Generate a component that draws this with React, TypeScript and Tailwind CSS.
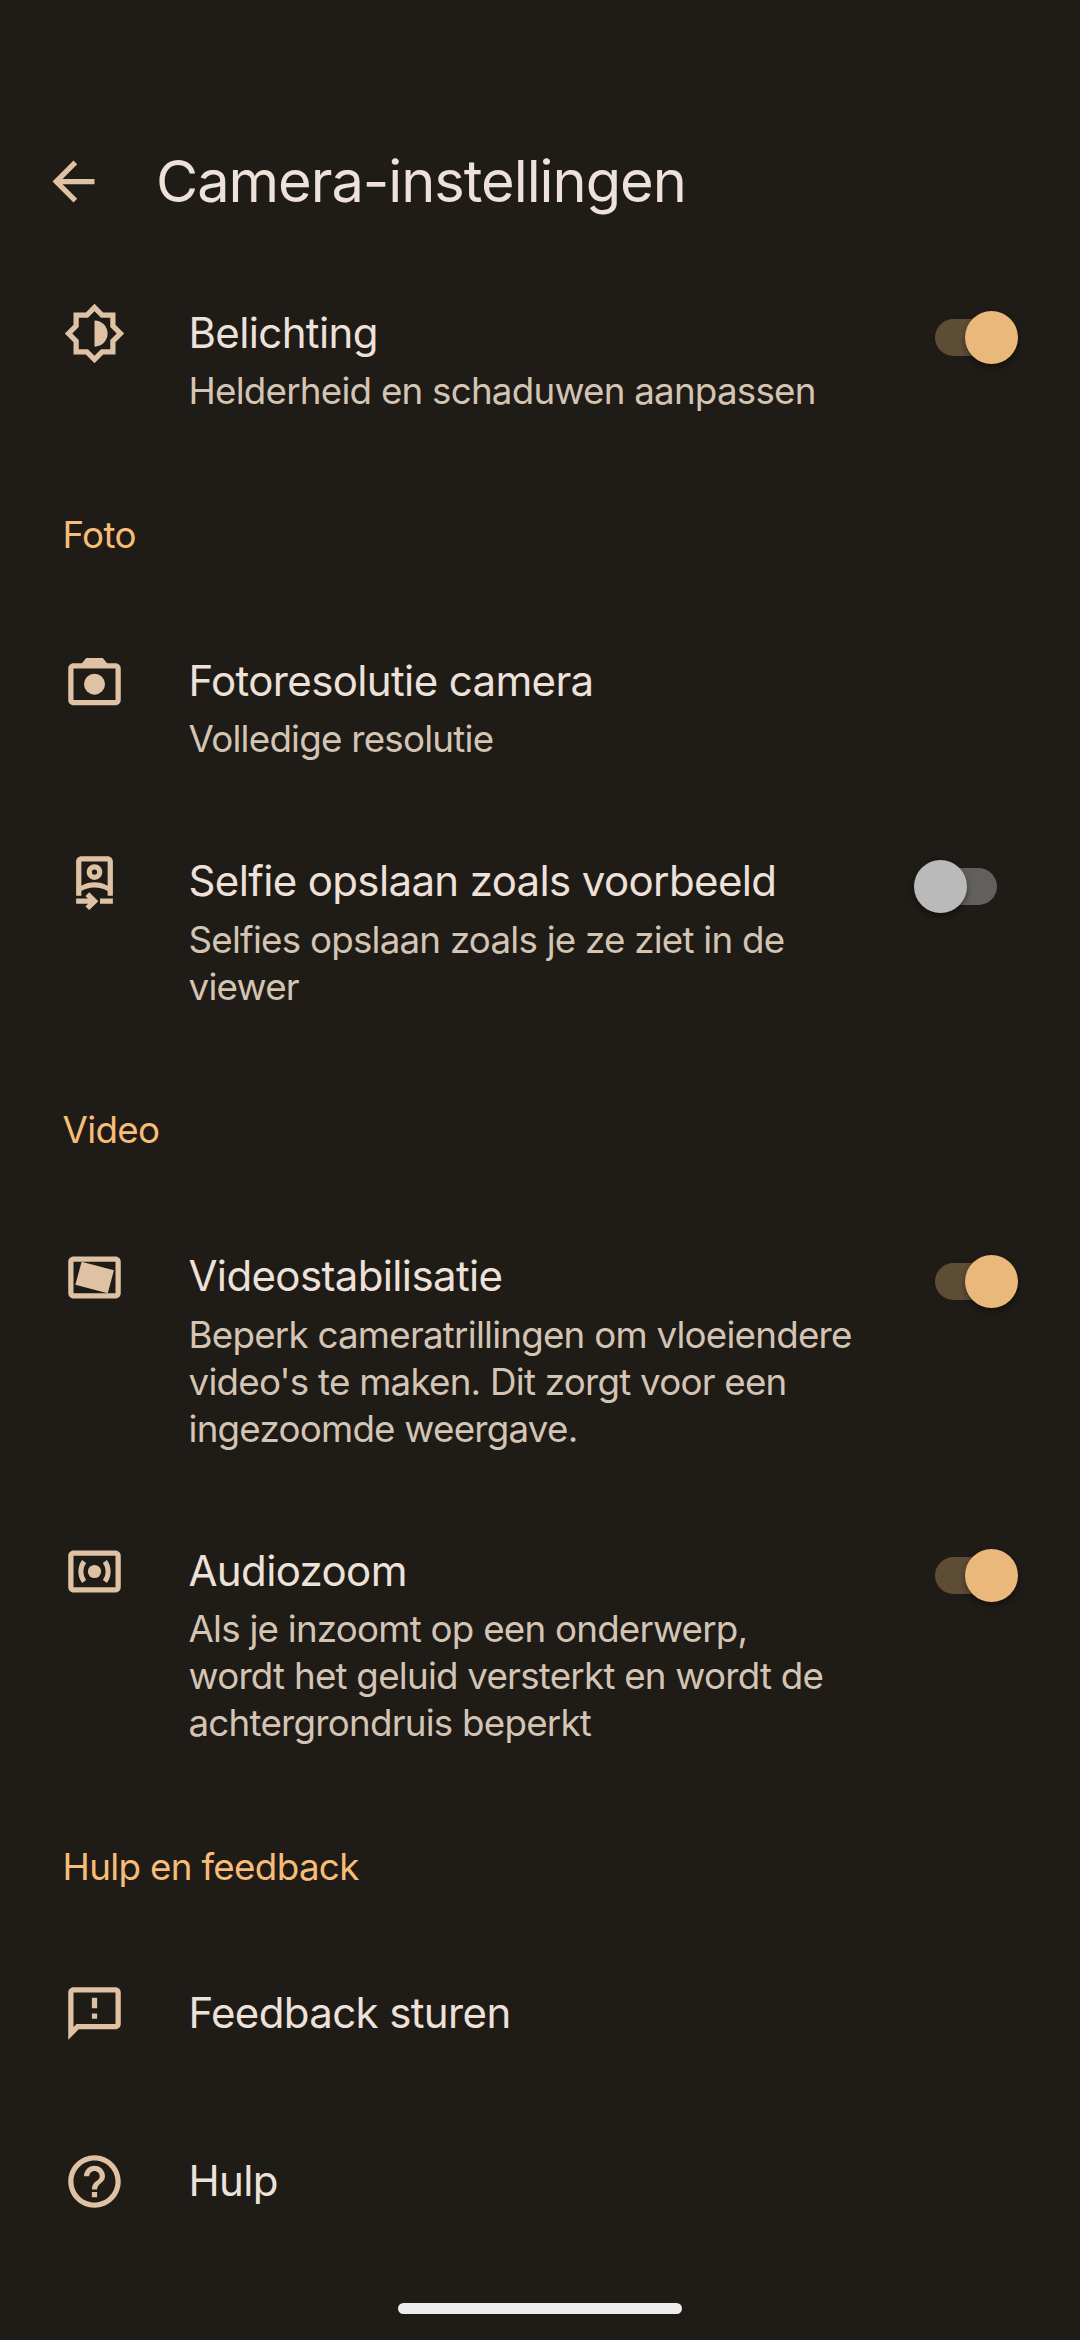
import React, { useState } from 'react';

interface IconProps {
  children: React.ReactNode;
}

const Icon: React.FC<IconProps> = ({ children }) => (
  <svg className="h-[63px] w-[63px] shrink-0" viewBox="0 0 24 24" fill="currentColor">
    {children}
  </svg>
);

const ExposureIcon = () => (
  <Icon>
    <path
      fillRule="evenodd"
      d="M20 15.31L23.31 12 20 8.69V4h-4.69L12 .69 8.69 4H4v4.69L.69 12 4 15.31V20h4.69L12 23.31 15.31 20H20v-4.69zM18 9.52V6h-3.52L12 3.52 9.52 6H6v3.52L3.52 12 6 14.48V18h3.52L12 20.48 14.48 18H18v-3.52L20.48 12 18 9.52z"
    />
    <path d="M12 7c2.76 0 5 2.24 5 5s-2.24 5-5 5z" />
  </Icon>
);

const CameraIcon = () => (
  <Icon>
    <path
      fillRule="evenodd"
      d="M8.85 3L7.2 5H4c-1.1 0-2 .9-2 2v12c0 1.1.9 2 2 2h16c1.1 0 2-.9 2-2V7c0-1.1-.9-2-2-2h-3.2l-1.65-2h-6.3zM4 7h16v12H4V7z"
    />
    <circle cx="12" cy="13" r="4" />
  </Icon>
);

const SelfieIcon = () => (
  <Icon>
    <path
      fillRule="evenodd"
      d="M7 2h10c1.1 0 2 .9 2 2v13h-2v-1.75c-1.4-.85-3.1-1.35-5-1.35s-3.6.5-5 1.35V17H5V4c0-1.1.9-2 2-2zM7 4v9.2c1.5-.8 3.2-1.25 5-1.25s3.5.45 5 1.25V4H7z"
    />
    <path fillRule="evenodd" d="M12 5a3 3 0 1 0 0 6 3 3 0 0 0 0-6zm0 2a1 1 0 1 1 0 2 1 1 0 0 1 0-2z" />
    <path d="M5 18.1h4.5l-.95-.95L10 15.7l3.45 3.4L10 22.5l-1.45-1.4 1-1H5zM14.1 18.1H19v2h-4.9z" />
  </Icon>
);

const StabilizationIcon = () => (
  <Icon>
    <path
      fillRule="evenodd"
      d="M4 4h16c1.1 0 2 .9 2 2v12c0 1.1-.9 2-2 2H4c-1.1 0-2-.9-2-2V6c0-1.1.9-2 2-2zm0 2v12h16V6H4z"
    />
    <path d="M7.1 6L19.4 9.2 17.05 18 4.7 14.75z" />
  </Icon>
);

const AudioIcon = () => (
  <Icon>
    <path
      fillRule="evenodd"
      d="M4 4h16c1.1 0 2 .9 2 2v12c0 1.1-.9 2-2 2H4c-1.1 0-2-.9-2-2V6c0-1.1.9-2 2-2zm0 2v12h16V6H4z"
    />
    <circle cx="12" cy="12" r="2.5" />
    <path
      d="M8.05 8.2a6.4 6.4 0 0 0 0 7.6M15.95 8.2a6.4 6.4 0 0 1 0 7.6"
      fill="none"
      stroke="currentColor"
      strokeWidth={1.9}
    />
  </Icon>
);

const FeedbackIcon = () => (
  <Icon>
    <path
      fillRule="evenodd"
      d="M20 2H4c-1.1 0-2 .9-2 2v18l4-4h14c1.1 0 2-.9 2-2V4c0-1.1-.9-2-2-2zm0 14H5.17L4 17.17V4h16v12z"
    />
    <path d="M11 12h2v2h-2zM11 6h2v4h-2z" />
  </Icon>
);

const HelpIcon = () => (
  <Icon>
    <path d="M11 18h2v-2h-2v2zm1-16C6.48 2 2 6.48 2 12s4.48 10 10 10 10-4.48 10-10S17.52 2 12 2zm0 18c-4.41 0-8-3.59-8-8s3.59-8 8-8 8 3.59 8 8-3.59 8-8 8zm0-14c-2.21 0-4 1.79-4 4h2c0-1.1.9-2 2-2s2 .9 2 2c0 2-3 1.75-3 5h2c0-2.25 3-2.5 3-5 0-2.21-1.79-4-4-4z" />
  </Icon>
);

interface ToggleProps {
  label: string;
  defaultOn: boolean;
}

const Toggle: React.FC<ToggleProps> = ({ label, defaultOn }) => {
  const [on, setOn] = useState(defaultOn);

  return (
    <button
      role="switch"
      aria-checked={on}
      aria-label={label}
      onClick={() => setOn(!on)}
      className="relative mt-[3.5px] flex h-[53px] w-[104px] shrink-0 items-center justify-center"
    >
      <span className={`h-[37px] w-[62px] rounded-full ${on ? 'bg-[#5e4d35]' : 'bg-[#62605c]'}`} />
      <span
        className={`absolute top-0 h-[53px] w-[53px] rounded-full shadow-[0_3px_6px_rgba(0,0,0,0.4)] ${
          on ? 'right-0 bg-[#ebb87c]' : 'left-0 bg-[#bababa]'
        }`}
      />
    </button>
  );
};

interface SettingRowProps {
  icon: React.ReactNode;
  title: string;
  summary?: string;
  toggle?: boolean;
}

const SettingRow: React.FC<SettingRowProps> = ({ icon, title, summary, toggle }) => (
  <div className="flex min-h-[168px] items-start py-[46.5px] pr-[62px] pl-[63px]">
    <div className="-mt-[5.5px] text-[#dec2a3]">{icon}</div>
    <div className="ml-[62.5px] flex-1">
      <div className="text-[42px] leading-[50px] tracking-[-0.015em] text-[#ede1d9]">{title}</div>
      {summary && (
        <div className="mt-[9.5px] mb-px text-[36.75px] leading-[47px] tracking-[-0.021em] whitespace-pre text-[#d3c4b4]">
          {summary}
        </div>
      )}
    </div>
    {toggle !== undefined && <Toggle label={title} defaultOn={toggle} />}
  </div>
);

const SectionHeader: React.FC<{ title: string }> = ({ title }) => (
  <h2 className="pt-[49px] pb-[51.5px] pl-[62.5px] text-[36.75px] leading-[47px] tracking-[-0.018em] text-[#f7bd78]">
    {title}
  </h2>
);

export default function App() {
  return (
    <div className="flex h-[2340px] w-[1080px] flex-col overflow-hidden bg-[#1f1b16] font-['Inter',sans-serif]">
      <header className="flex h-[261px] shrink-0 items-center pt-[101px] pl-[42px]">
        <button aria-label="Terug" className="text-[#dec2a3]">
          <Icon>
            <path d="M20 11H7.83l5.59-5.59L12 4l-8 8 8 8 1.41-1.41L7.83 13H20v-2z" />
          </Icon>
        </button>
        <h1 className="ml-[51px] text-[57.75px] leading-[70px] tracking-[-0.018em] text-[#ede1d9]">
          Camera-instellingen
        </h1>
      </header>

      <main className="flex-1">
        <SettingRow
          icon={<ExposureIcon />}
          title="Belichting"
          summary="Helderheid en schaduwen aanpassen"
          toggle={true}
        />

        <SectionHeader title="Foto" />
        <SettingRow
          icon={<CameraIcon />}
          title="Fotoresolutie camera"
          summary="Volledige resolutie"
        />
        <SettingRow
          icon={<SelfieIcon />}
          title="Selfie opslaan zoals voorbeeld"
          summary={'Selfies opslaan zoals je ze ziet in de\nviewer'}
          toggle={false}
        />

        <SectionHeader title="Video" />
        <SettingRow
          icon={<StabilizationIcon />}
          title="Videostabilisatie"
          summary={"Beperk cameratrillingen om vloeiendere\nvideo's te maken. Dit zorgt voor een\ningezoomde weergave."}
          toggle={true}
        />
        <SettingRow
          icon={<AudioIcon />}
          title="Audiozoom"
          summary={'Als je inzoomt op een onderwerp,\nwordt het geluid versterkt en wordt de\nachtergrondruis beperkt'}
          toggle={true}
        />

        <SectionHeader title="Hulp en feedback" />
        <SettingRow icon={<FeedbackIcon />} title="Feedback sturen" />
        <SettingRow icon={<HelpIcon />} title="Hulp" />
      </main>

      {/* Gesture bar */}
      <div className="mb-[26px] h-[11px] w-[284px] shrink-0 self-center rounded-full bg-[#ececec]" />
    </div>
  );
}
